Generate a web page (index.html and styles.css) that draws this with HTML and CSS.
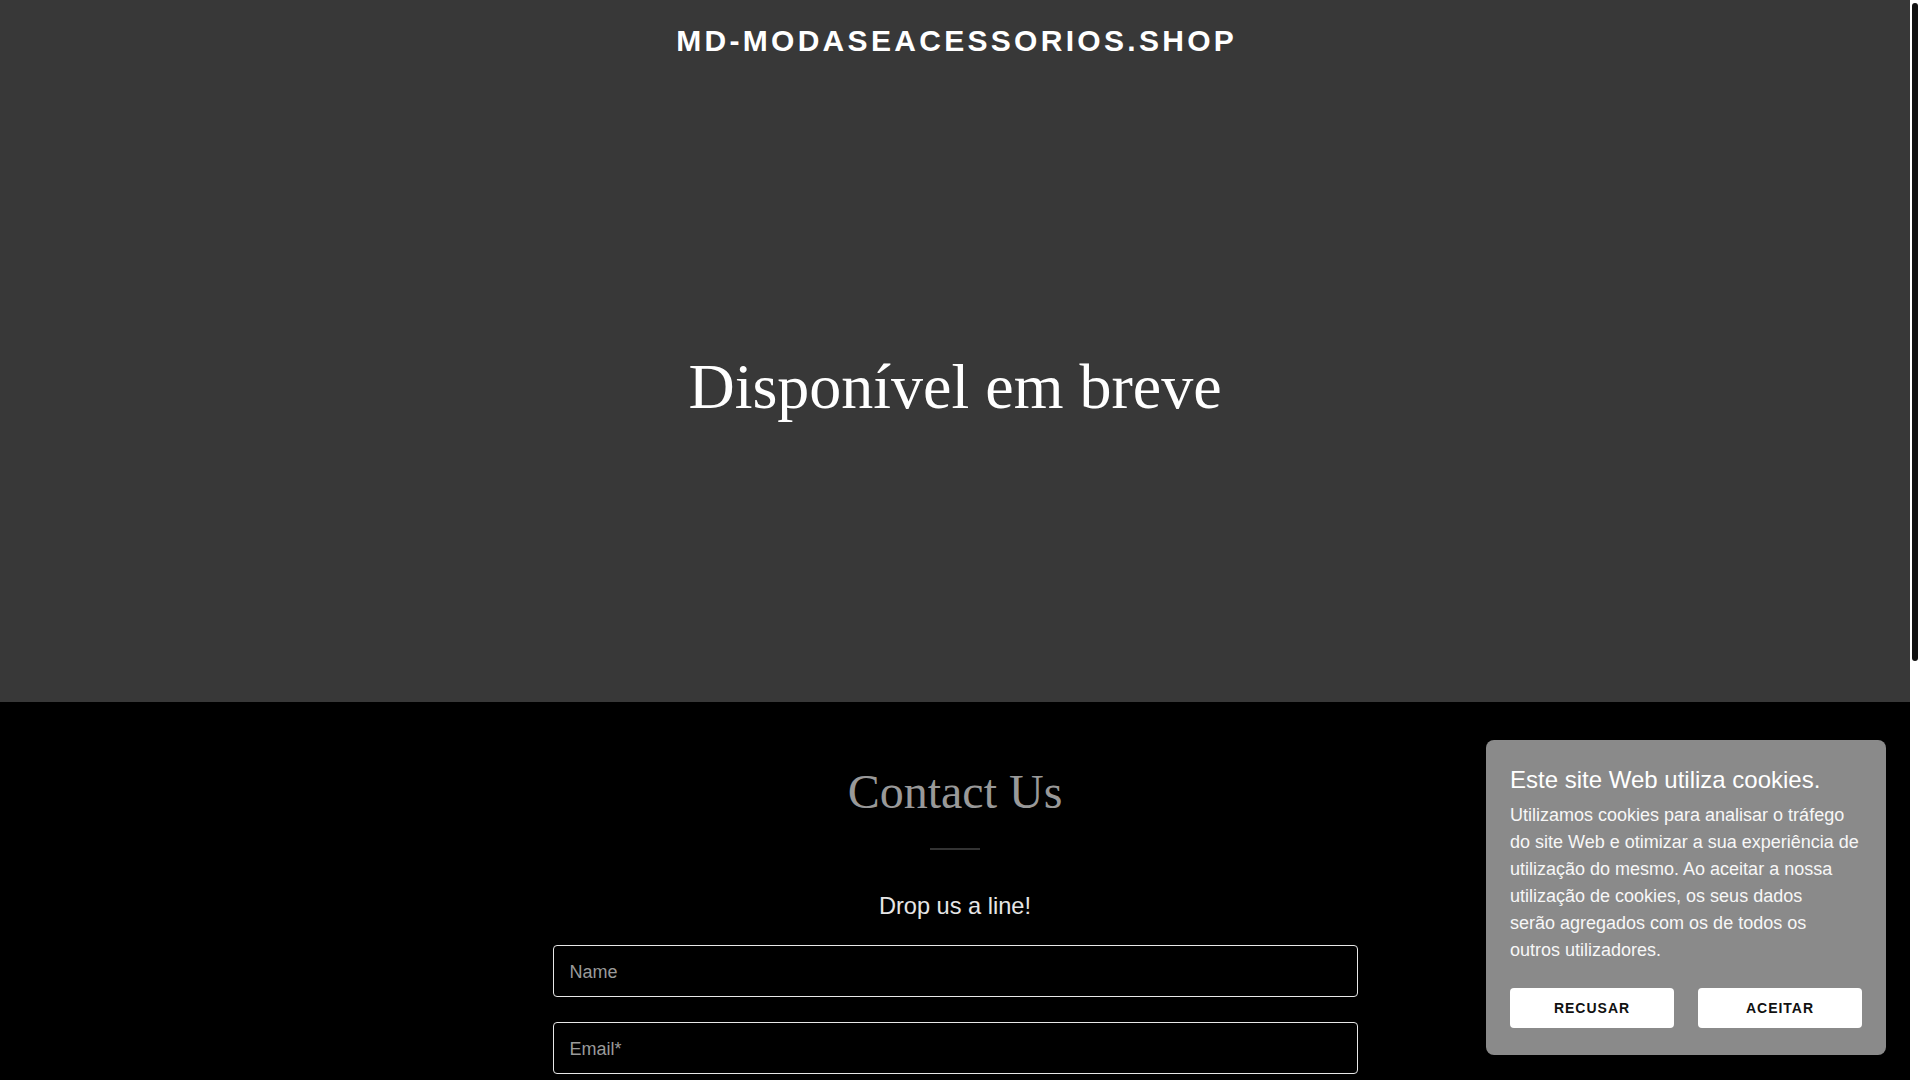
FILE: index.html
```html
<!DOCTYPE html>
<html lang="pt">
<head>
<meta charset="utf-8">
<title>md-modaseacessorios.shop</title>
<link rel="stylesheet" href="styles.css">
</head>
<body>
<div class="page">
  <section class="hero">
    <header class="header">
      <h1 class="logo">MD-MODASEACESSORIOS.SHOP</h1>
    </header>
    <div class="hero-body">
      <h2 class="headline">Disponível em breve</h2>
    </div>
  </section>

  <section class="contact">
    <h2 class="contact-title">Contact Us</h2>
    <hr class="divider">
    <h4 class="subtitle">Drop us a line!</h4>
    <form class="form">
      <input class="field" type="text" placeholder="Name">
      <input class="field" type="email" placeholder="Email*">
      <textarea class="field area" placeholder="Message"></textarea>
      <button class="send" type="button">ENVIAR</button>
    </form>
    <p class="recaptcha">This site is protected by reCAPTCHA and the Google Privacy Policy and Terms of Service apply.</p>
  </section>

  <footer class="footer">
    <p class="copy">Copyright © 2024 md-modaseacessorios.shop - Todos os direitos reservados.</p>
    <p class="powered">Com tecnologia de GoDaddy</p>
  </footer>
</div>

<div class="scrollbar"><div class="scrollbar-thumb"></div></div>

<div class="cookie">
  <h3 class="cookie-title">Este site Web utiliza cookies.</h3>
  <p class="cookie-text">Utilizamos cookies para analisar o tráfego do site Web e otimizar a sua experiência de utilização do mesmo. Ao aceitar a nossa utilização de cookies, os seus dados<br>serão agregados com os de todos os<br>outros utilizadores.</p>
  <div class="cookie-actions">
    <button class="cookie-btn" type="button">RECUSAR</button>
    <button class="cookie-btn" type="button">ACEITAR</button>
  </div>
</div>
</body>
</html>
```

FILE: styles.css
```css
html {
  background: #000;
}
body {
  margin: 0;
  background: #000;
  font-family: "Liberation Sans", Arial, sans-serif;
  color: #fff;
}
.page {
  display: flex;
  flex-direction: column;
  margin-right: 10px;
}
.scrollbar {
  position: fixed;
  top: 0;
  right: 0;
  bottom: 0;
  width: 10px;
  background: #fff;
}
.scrollbar-thumb {
  position: absolute;
  top: 3px;
  left: 2px;
  right: 2px;
  height: 658px;
  background: #111;
  border-radius: 3px;
}
.hero {
  background: #383838;
  height: 702px;
  display: flex;
  flex-direction: column;
}
.header {
  padding-top: 25px;
  display: flex;
  justify-content: center;
}
.logo {
  margin: 0 -3.3px 0 0;
  font-size: 30px;
  line-height: 32px;
  font-weight: 700;
  letter-spacing: 3.3px;
  color: #fff;
}
.hero-body {
  flex: 1;
  display: flex;
  align-items: center;
  justify-content: center;
}
.headline {
  margin: 15px 0 0;
  font-family: "Liberation Serif", "Times New Roman", serif;
  font-weight: 400;
  font-size: 64px;
  line-height: 1.25;
  color: #fff;
}
.contact {
  display: flex;
  flex-direction: column;
  align-items: center;
  padding: 60px 0 40px;
}
.contact-title {
  margin: 0;
  font-family: "Liberation Serif", "Times New Roman", serif;
  font-weight: 400;
  font-size: 48px;
  line-height: 60px;
  color: #999;
}
.divider {
  width: 50px;
  height: 2px;
  border: 0;
  margin: 26px 0 0;
  background: #333;
}
.subtitle {
  margin: 39px 0 0;
  font-size: 23.6px;
  line-height: 34px;
  font-weight: 400;
  color: #e6e6e6;
}
.form {
  width: 805px;
  margin-top: 22px;
  display: flex;
  flex-direction: column;
  gap: 25px;
}
.field {
  box-sizing: border-box;
  height: 52px;
  padding: 3px 16px 0;
  border: 1px solid #e8e8e8;
  border-radius: 4px;
  background: #000;
  color: #fff;
  font-family: "Liberation Sans", Arial, sans-serif;
  font-size: 18px;
}
.field::placeholder {
  color: #9a9a9a;
}
.area {
  height: 160px;
  padding-top: 14px;
  resize: none;
}
.send {
  height: 56px;
  border: 0;
  border-radius: 4px;
  background: #fff;
  color: #000;
  font-family: "Liberation Sans", Arial, sans-serif;
  font-weight: 700;
  font-size: 14px;
  letter-spacing: 1px;
}
.recaptcha {
  margin: 24px 0 0;
  font-size: 14px;
  color: #999;
}
.footer {
  display: flex;
  flex-direction: column;
  align-items: center;
  padding: 40px 0 56px;
  font-size: 16px;
  color: #aaa;
}
.footer p {
  margin: 8px 0;
}
.cookie {
  position: fixed;
  right: 34px;
  bottom: 25px;
  box-sizing: border-box;
  width: 400px;
  padding: 25px 24px 27px;
  background: #8a8a8a;
  border-radius: 8px;
}
.cookie-title {
  margin: 0 0 7px;
  font-size: 24px;
  line-height: 30px;
  font-weight: 400;
  color: #fff;
}
.cookie-text {
  margin: 0;
  font-size: 18px;
  line-height: 27px;
  color: #f7f7f7;
}
.cookie-actions {
  display: flex;
  gap: 24px;
  margin-top: 24px;
}
.cookie-btn {
  flex: 1;
  height: 40px;
  border: 0;
  border-radius: 4px;
  background: #fff;
  color: #111;
  font-family: "Liberation Sans", Arial, sans-serif;
  font-weight: 700;
  font-size: 14px;
  letter-spacing: 1px;
}
```
